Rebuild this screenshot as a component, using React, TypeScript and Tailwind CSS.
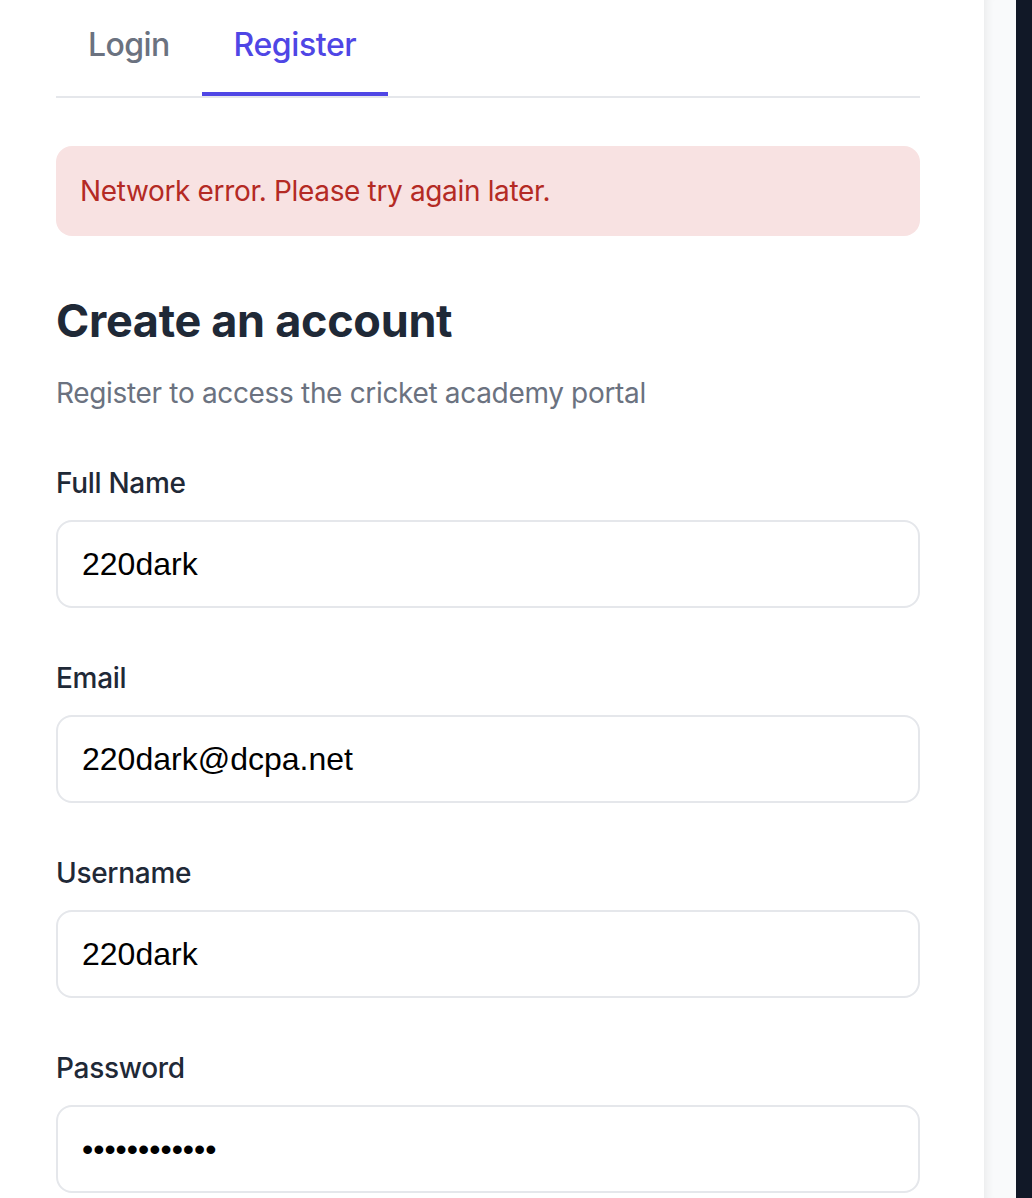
import React, { useState } from 'react';

const fields = [
  { label: 'Full Name', type: 'text', value: '220dark' },
  { label: 'Email', type: 'email', value: '220dark@dcpa.net' },
  { label: 'Username', type: 'text', value: '220dark' },
  { label: 'Password', type: 'password', value: '220dark@2024' },
];

export default function App() {
  const [tab, setTab] = useState<'login' | 'register'>('register');

  return (
    <div className="flex h-[1198px] w-full overflow-hidden bg-white font-['Inter','Noto_Sans',sans-serif]">
      {/* Main panel */}
      <div className="flex-1 bg-white px-[56px]">
        <div className="w-[864px]">
          {/* Tabs */}
          <div className="flex border-b-2 border-[#e5e7eb]">
            <button
              type="button"
              onClick={() => setTab('login')}
              className={`px-[32px] pt-[21px] pb-[23px] text-[32px] leading-[48px] tracking-[-0.6px] font-medium border-b-4 ${tab === 'login' ? 'text-[#4f46e5] border-[#4f46e5]' : 'text-[#6b7280] border-transparent'}`}
            >
              Login
            </button>
            <button
              type="button"
              onClick={() => setTab('register')}
              className={`px-[32px] pt-[21px] pb-[23px] text-[32px] leading-[48px] tracking-[-0.4px] font-medium border-b-4 ${tab === 'register' ? 'text-[#4f46e5] border-[#4f46e5]' : 'text-[#6b7280] border-transparent'}`}
            >
              Register
            </button>
          </div>

          {/* Error */}
          <div className="mt-[48px] rounded-[16px] bg-[#f8e2e2] px-[24px] py-[24px] text-[28px] leading-[42px] tracking-[-0.35px] text-[#b42a24]">
            Network error. Please try again later.
          </div>

          {/* Heading */}
          <h1 className="mt-[58px] text-[45px] leading-[54px] font-bold tracking-[-0.3px] text-[#1f2937]">
            Create an account
          </h1>
          <p className="mt-[24px] text-[28px] leading-[42px] tracking-[-0.33px] text-[#6b7280]">
            Register to access the cricket academy portal
          </p>

          {/* Form */}
          <form className="mt-[48px]" onSubmit={(e) => e.preventDefault()}>
            {fields.map((f) => (
              <div key={f.label} className="mb-[49px]">
                <label className="block text-[28px] leading-[42px] tracking-[-0.3px] font-medium text-[#1f2937]">
                  {f.label}
                </label>
                <input
                  type={f.type}
                  defaultValue={f.value}
                  className="mt-[16px] block h-[88px] w-full rounded-[16px] border-2 border-[#e5e7eb] bg-white px-[24px] text-[32px] text-black outline-none font-['Liberation_Sans','Arial',sans-serif]"
                />
              </div>
            ))}
          </form>
        </div>
      </div>

      {/* Side strips */}
      <div className="w-[32px] shrink-0 bg-[#f9fafb] shadow-[inset_10px_0_10px_-8px_rgba(0,0,0,0.07)]" />
      <div className="w-[16px] shrink-0 bg-[#111827]" />
    </div>
  );
}
